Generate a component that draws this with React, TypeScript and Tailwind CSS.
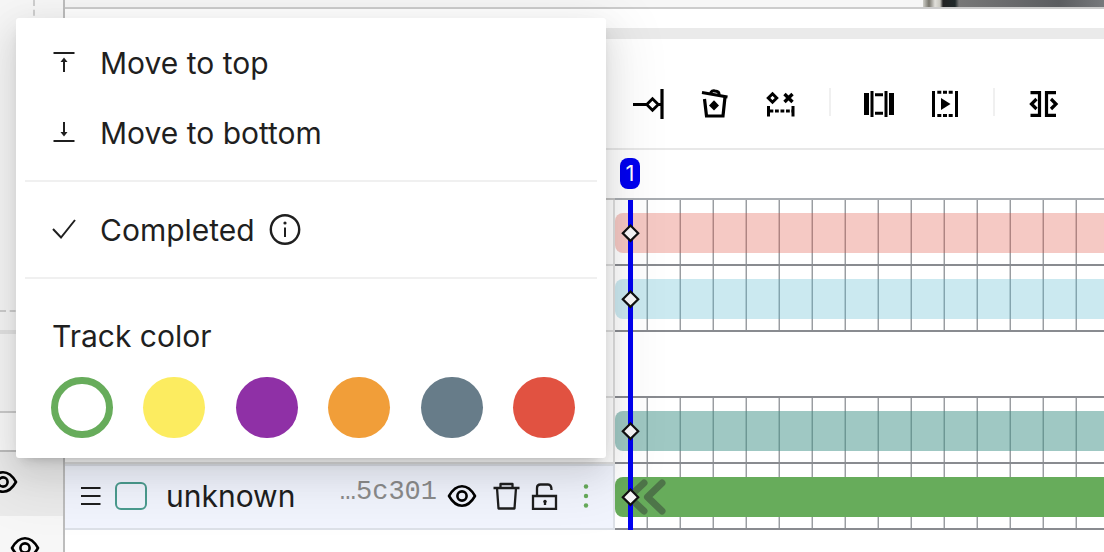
import React, { useState } from 'react';

const SWATCHES = [
  { name: 'green', className: 'border-[7px] border-[#67ac5b] bg-white' },
  { name: 'yellow', className: 'bg-[#fcec60]' },
  { name: 'purple', className: 'bg-[#8f30a6]' },
  { name: 'orange', className: 'bg-[#f19e39]' },
  { name: 'slate', className: 'bg-[#677c89]' },
  { name: 'red', className: 'bg-[#e15241]' },
];

const TRACKS = [
  { id: 'a', bar: 'bg-[rgba(222,75,58,0.3)]' },
  { id: 'b', bar: 'bg-[rgba(82,182,205,0.3)]' },
  { id: 'c', bar: null },
  { id: 'd', bar: 'bg-[rgba(63,145,135,0.5)]' },
  { id: 'e', bar: 'bg-[#67ac5b]', rewind: true },
];

const EyeIcon = ({ className = '' }: { className?: string }) => (
  <svg className={`h-7 w-[30px] shrink-0 ${className}`} viewBox="0 0 30 28" fill="none" stroke="#000" strokeWidth="2.600">
    <path d="M2 14C6 7 10 4.300 15 4.300S24 7 28 14C24 21 20 23.700 15 23.700S6 21 2 14Z" strokeLinejoin="round" />
    <circle cx="15" cy="14" r="4.600" />
  </svg>
);

const ToolIcon = ({ children }: { children: React.ReactNode }) => (
  <svg className="h-9 w-9" viewBox="0 0 36 36" fill="none" stroke="#000" strokeWidth="3">
    {children}
  </svg>
);

const ToolButton = ({ label, children }: { label: string; children: React.ReactNode }) => (
  <button type="button" aria-label={label} className="flex h-16 w-[66px] shrink-0 items-center justify-center">
    <ToolIcon>{children}</ToolIcon>
  </button>
);

const Separator = () => <div className="mx-[15px] mb-1 h-7 w-0.5 shrink-0 bg-[#f0f0f0]" />;

/* TOOLBAR */
const Toolbar = () => (
  <div className="flex h-full items-center pt-5 pl-px">
    <ToolButton label="Go to keyframe">
      <path d="M2 18.500H15M27 18.500H30" />
      <path d="M21.500 12.700L27.300 18.500L21.500 24.300L15.700 18.500Z" strokeWidth="2.800" />
      <path d="M31 3V33" strokeWidth="3.200" />
    </ToolButton>
    <ToolButton label="Delete keyframe">
      <path d="M5 6.500L30.500 11" />
      <path d="M13.500 8C14 5 16 4.500 18 5C21 5 22.500 6.500 22 9.500" />
      <path d="M7.500 13L9.500 30H26L28 11" strokeWidth="3.200" />
      <path d="M17 14.300L22 19.500L17 24.500L12 19.500Z" fill="#000" stroke="none" />
    </ToolButton>
    <ToolButton label="Clear range">
      <path d="M9.500 7.800L13.700 12L9.500 16.200L5.300 12Z" strokeWidth="3" />
      <path d="M21.500 8L29.500 16M29.500 8L21.500 16" strokeWidth="3.400" />
      <path d="M5.500 20V30.500M30 20V30.500" />
      <path d="M6.500 25H30" strokeDasharray="3.800 1.700" strokeWidth="3" />
    </ToolButton>
    <Separator />
    <ToolButton label="Fit range">
      <path d="M3 7H8V29H3ZM28 7H33V29H28Z" fill="#000" stroke="none" />
      <path d="M11 5V31M25 5V31" />
      <path d="M14 8.700H22M14 27.300H22" />
    </ToolButton>
    <ToolButton label="Play range">
      <path d="M6.500 5V31M29.500 5V31" />
      <path d="M10.300 6.200H26M10.300 29.500H26" strokeDasharray="4 1.700" />
      <path d="M14 12L23.500 18L14 24Z" fill="#000" stroke="none" />
    </ToolButton>
    <Separator />
    <ToolButton label="Split track">
      <path d="M5.500 6.700H14.500V29.400H5.500" strokeWidth="3.200" />
      <path d="M31 6.700H21.500V29.400H31" strokeWidth="3.200" />
      <path d="M11.500 13L6.500 18L11.500 23M26 13L31 18L26 23" strokeWidth="3.200" />
    </ToolButton>
  </div>
);

const MenuItem = ({ icon, children }: { icon: React.ReactNode; children: React.ReactNode }) => (
  <button type="button" role="menuitem" className="flex h-[70px] w-full items-center pl-9 text-left">
    <span className="mr-6 flex w-6 justify-center">{icon}</span>
    {children}
  </button>
);

/* TRACK MENU */
const TrackMenu = () => {
  const [color, setColor] = useState('green');
  return (
    <div
      role="menu"
      className="absolute top-[18px] left-4 z-30 w-[590px] rounded-[3px] bg-white pt-[10px] pb-5 text-[30px] leading-9 shadow-[0_12px_32px_rgba(0,0,0,0.1),0_6px_12px_-8px_rgba(0,0,0,0.3),0_18px_56px_16px_rgba(0,0,0,0.07)]"
    >
      <MenuItem
        icon={
          <svg className="h-6 w-6" viewBox="0 0 24 24" stroke="#1f1f1f" strokeWidth="2">
            <path d="M1.500 2H22.500M12 21V9" />
            <path d="M12 6.500L15.500 11H8.500Z" fill="#1f1f1f" stroke="none" />
          </svg>
        }
      >
        Move to top
      </MenuItem>
      <MenuItem
        icon={
          <svg className="h-6 w-6" viewBox="0 0 24 24" stroke="#1f1f1f" strokeWidth="2">
            <path d="M1.500 20H22.500M12 1V13" />
            <path d="M12 15.500L15.500 11H8.500Z" fill="#1f1f1f" stroke="none" />
          </svg>
        }
      >
        Move to bottom
      </MenuItem>
      <hr className="mx-[9px] mt-3 mb-[13px] border-t-2 border-[#f0f0f0]" />
      <MenuItem
        icon={
          <svg className="h-6 w-6 shrink-0" viewBox="0 0 24 24" fill="none" stroke="#1f1f1f" strokeWidth="2">
            <path d="M1 11L9 19.500L23 2" />
          </svg>
        }
      >
        Completed
        <svg className="ml-3.5 h-8 w-8" viewBox="0 0 32 32" fill="none" stroke="#1f1f1f" strokeWidth="2.400">
          <circle cx="16" cy="15.500" r="14.200" />
          <path d="M16 13.500V23" strokeWidth="2" />
          <circle cx="16" cy="9" r="1.600" fill="#1f1f1f" stroke="none" />
        </svg>
      </MenuItem>
      <hr className="mx-[9px] mt-3 mb-[39px] border-t-2 border-[#f0f0f0]" />
      <div className="pr-[31px] pl-[35px]">
        <div className="mb-[23px] pl-px">Track color</div>
        <div className="flex justify-between">
          {SWATCHES.map((s) => (
            <button
              key={s.name}
              type="button"
              aria-label={s.name}
              aria-pressed={color === s.name}
              onClick={() => setColor(s.name)}
              className={`h-[61px] w-[62px] rounded-full ${s.className}`}
            />
          ))}
        </div>
      </div>
    </div>
  );
};

/* ACTIVE TRACK ROW */
const TrackLabel = () => (
  <div className="flex h-[66px] items-center border-2 border-l-0 border-[#dde1e8] bg-[#f2f5fe] pb-0.5 pl-[15px]">
    <svg className="h-6 w-[22px] shrink-0" viewBox="0 0 22 24" stroke="#1f1f1f" strokeWidth="2">
      <path d="M1 4H20.500M1 12H20.500M1 20H20.500" />
    </svg>
    <input
      type="checkbox"
      aria-label="Select unknown"
      className="ml-[13px] h-7 w-8 shrink-0 appearance-none rounded-md border-2 border-[#4b9c8f]"
    />
    <span className="ml-[19px] flex-1 text-[30px] leading-9">unknown</span>
    <span className="mb-2 font-['Liberation_Mono',monospace] text-[27px] leading-8 text-[#8c8c8c]">…5c301</span>
    <button type="button" aria-label="Toggle visibility" className="ml-[10px]">
      <EyeIcon />
    </button>
    <button type="button" aria-label="Delete track" className="ml-4">
      <svg className="h-7 w-7" viewBox="0 0 28 28" fill="none" stroke="#1f1f1f" strokeWidth="2.300">
        <path d="M.5 6H26.500M7.500 6V2H19.500V6M4 6L5.500 26.500H21.500L23 6" strokeLinejoin="round" />
      </svg>
    </button>
    <button type="button" aria-label="Lock track" className="ml-[10px]">
      <svg className="h-7 w-7" viewBox="0 0 28 28" fill="none" stroke="#1f1f1f" strokeWidth="2.300">
        <path d="M2 14H25V27H2Z" />
        <path d="M6 13V6Q6 2.500 9.500 2.500H17Q20.500 2.500 20.500 8" />
        <path d="M14 19V23" />
        <circle cx="14" cy="19.500" r="1.700" fill="#1f1f1f" stroke="none" />
      </svg>
    </button>
    <button type="button" aria-label="More" className="mr-[23px] ml-[23px]">
      <svg className="h-7 w-2" viewBox="0 0 8 28" fill="#67ac5b">
        <circle cx="4" cy="4.500" r="2.200" />
        <circle cx="4" cy="14" r="2.200" />
        <circle cx="4" cy="23.500" r="2.200" />
      </svg>
    </button>
  </div>
);

const Keyframe = () => (
  <svg className="absolute top-1/2 left-1.5 z-20 h-5 w-5 -translate-y-1/2" viewBox="0 0 20 20">
    <path d="M9.500 2.500L17.200 10.200L9.500 17.900L1.800 10.200Z" fill="#f8f8f8" stroke="#111" strokeWidth="2.200" />
  </svg>
);

const Sidebar = () => (
  <aside className="flex w-[65px] shrink-0 flex-col overflow-hidden border-r-2 border-[#bdbdbd] bg-[#f7f7f7]">
    <div className="h-[312px] w-[35px] shrink-0 border-r-2 border-b-2 border-dashed border-[#cfcfcf]" />
    <div className="mt-[18px] h-1 shrink-0 bg-[#e4e4e4]" />
    <div className="h-[79px] shrink-0 border-b-2 border-[#cccccc]" />
    <div className="h-[39px] shrink-0 border-b-2 border-[#bdbdbd] bg-[#fafafa]" />
    <div className="flex h-16 shrink-0 items-center bg-[#ebebeb] pb-1">
      <EyeIcon className="-ml-3" />
    </div>
    <div className="flex h-16 shrink-0 items-center pl-[10px]">
      <EyeIcon />
    </div>
  </aside>
);

export default function App() {
  return (
    <div className="relative flex h-screen overflow-hidden bg-white font-['Inter',sans-serif] text-[#1f1f1f]">
      <Sidebar />
      <main className="flex min-w-0 flex-1 flex-col">
        <div className="flex h-[9px] shrink-0 justify-end border-b-2 border-[#cccccc] bg-[#f6f6f6]">
          <div className="w-[181px] bg-[linear-gradient(to_right,#cfcfc9_0,#77756c_6px,#e0dfda_12px,#c9c8c0_17px,#222_20px,#20292a_32px,#777_36px,#68696b_50%,#5b5d60_75%,#77797c_100%)]" />
        </div>
        <div className="h-[19px] shrink-0" />
        <div className="h-[11px] shrink-0 bg-[#eaeaea]" />
        <div className="flex flex-1">
          <section className="flex w-[550px] shrink-0 flex-col">
            <div className="h-[111px] border-b-2 border-[#e8e8e8]" />
            <div className="h-[50px] border-b-2 border-[#c4c4c4]" />
            {TRACKS.slice(0, 4).map((t) => (
              <div key={t.id} className="h-[66px] border-r-2 border-b-2 border-[#dedede]" />
            ))}
            <TrackLabel />
          </section>
          <section className="min-w-0 flex-1">
            <div className="h-[111px] overflow-hidden border-b-2 border-[#e8e8e8]">
              <Toolbar />
            </div>
            <div className="relative">
              <div className="h-[50px] border-b-2 border-[#a9adb2] pt-2 pl-[5px]">
                <div className="h-[31px] w-5 rounded-lg bg-[#0000f0] text-center text-[22px] leading-[31px] text-white">1</div>
              </div>
              <div className="absolute top-[50px] bottom-0 left-[13px] z-10 w-[5px] bg-[#0000f0]" />
              {TRACKS.map((t) => (
                <div
                  key={t.id}
                  className={`flex h-[66px] items-center border-b-2 border-[#898b90] ${
                    t.bar
                      ? 'bg-[repeating-linear-gradient(to_right,transparent_0,transparent_31px,#cfd1d3_31px,#cfd1d3_32px,#9a9da1_32px,#9a9da1_33px)]'
                      : ''
                  }`}
                >
                  {t.bar && (
                    <div className={`relative mt-0.5 h-10 w-full overflow-hidden rounded-l-lg ${t.bar}`}>
                      <Keyframe />
                      {t.rewind && (
                        <svg className="ml-2 h-10 w-12" viewBox="0 0 48 40" fill="none" stroke="#4e7549" strokeWidth="7" strokeLinecap="round" strokeLinejoin="round">
                          <path d="M21 6L6 20L21 34M39 6L24.500 20L39 34" />
                        </svg>
                      )}
                    </div>
                  )}
                </div>
              ))}
            </div>
          </section>
        </div>
      </main>
      <TrackMenu />
    </div>
  );
}
